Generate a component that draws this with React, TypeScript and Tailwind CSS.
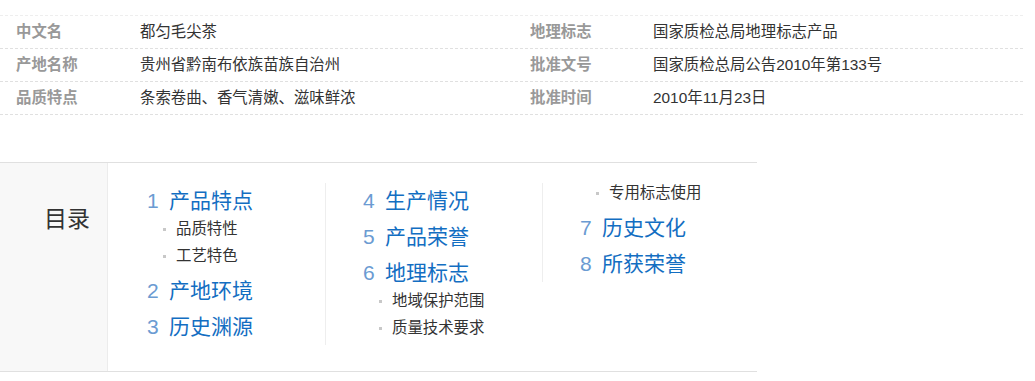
import React from 'react';

const FONT = { fontFamily: '"Liberation Sans", Arial, "Noto Sans CJK SC", sans-serif' };

const INFO: [string, string, string, string][] = [
  ['中文名', '都匀毛尖茶', '地理标志', '国家质检总局地理标志产品'],
  ['产地名称', '贵州省黔南布依族苗族自治州', '批准文号', '国家质检总局公告2010年第133号'],
  ['品质特点', '条索卷曲、香气清嫩、滋味鲜浓', '批准时间', '2010年11月23日'],
];

type Item = { level: 1 | 2; text: string; index?: number };

const COLUMNS: Item[][] = [
  [
    { level: 1, index: 1, text: '产品特点' },
    { level: 2, text: '品质特性' },
    { level: 2, text: '工艺特色' },
    { level: 1, index: 2, text: '产地环境' },
    { level: 1, index: 3, text: '历史渊源' },
  ],
  [
    { level: 1, index: 4, text: '生产情况' },
    { level: 1, index: 5, text: '产品荣誉' },
    { level: 1, index: 6, text: '地理标志' },
    { level: 2, text: '地域保护范围' },
    { level: 2, text: '质量技术要求' },
  ],
  [
    { level: 2, text: '专用标志使用' },
    { level: 1, index: 7, text: '历史文化' },
    { level: 1, index: 8, text: '所获荣誉' },
  ],
];

const Dotted = ({ light }: { light?: boolean }) => (
  <div
    className={
      light
        ? 'h-px w-full bg-[linear-gradient(to_right,#eeeeee_60%,transparent_0)] bg-[length:5px_1px] bg-repeat-x'
        : 'h-px w-full bg-[linear-gradient(to_right,#e0e0e0_60%,transparent_0)] bg-[length:5px_1px] bg-repeat-x'
    }
  />
);

const CatalogItem = ({ item }: { item: Item }) => {
  if (item.level === 1) {
    return (
      <li className="flex h-[36px] items-center">
        <span className="w-[22px] text-[21px] text-[#6b9bd2]">{item.index}</span>
        <span className="text-[21px] text-[#136ec2]">{item.text}</span>
      </li>
    );
  }
  return (
    <li className="mb-[7px] flex h-[20px] items-center pl-[16px]">
      <span className="mr-[10px] h-[3px] w-[3px] bg-[#c8c8c8]"></span>
      <span className="text-[15.4px] text-[#333]">{item.text}</span>
    </li>
  );
};

export default function App() {
  return (
    <div className="min-h-screen w-[1035px] bg-white" style={FONT}>
      {/* basic info */}
      <div className="w-[1025px] pt-[15px]">
        <Dotted light />
        {INFO.map(([k1, v1, k2, v2]) => (
          <div key={k1}>
            <div className="flex h-[32px] items-center text-[15.4px]">
              <div className="flex w-[514px] pl-4">
                <span className="w-[124px] font-bold text-[#999]">{k1}</span>
                <span className="text-[#333]">{v1}</span>
              </div>
              <div className="flex pl-4">
                <span className="w-[123px] font-bold text-[#999]">{k2}</span>
                <span className="text-[#333]">{v2}</span>
              </div>
            </div>
            <Dotted />
          </div>
        ))}
      </div>

      {/* catalog */}
      <div className="mt-[47px] flex w-[757px] border-y border-[#e0e0e0]">
        <div className="w-[108px] shrink-0 border-r border-[#ececec] bg-[#f8f8f8] pl-[44px] pt-[43px]">
          <h2 className="text-[23px] leading-[26px] font-normal text-[#333]">目录</h2>
        </div>
        <div className="flex flex-1 items-start pb-[26px] pt-[20px]">
          {COLUMNS.map((col, i) => (
            <ul
              key={i}
              className={
                i === 0
                  ? 'w-[217px] pl-[39px]'
                  : 'w-[217px] border-l border-[#eeeeee] pl-[37px]'
              }
            >
              {col.map((item) => (
                <CatalogItem key={item.text} item={item} />
              ))}
            </ul>
          ))}
        </div>
      </div>
    </div>
  );
}
